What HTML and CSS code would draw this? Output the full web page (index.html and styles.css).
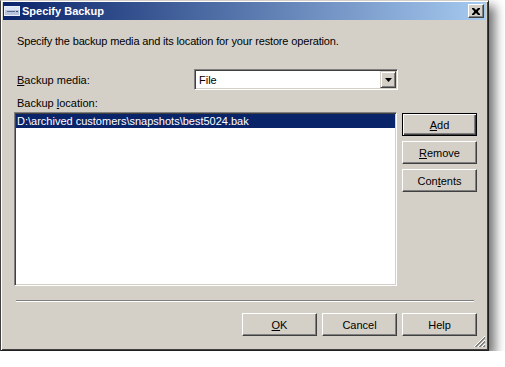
FILE: index.html
```html
<!DOCTYPE html>
<html>
<head>
<meta charset="utf-8">
<title>Specify Backup</title>
<link rel="stylesheet" href="styles.css">
</head>
<body>
<div class="window">
  <div class="titlebar">
    <svg class="ticon" width="16" height="10" viewBox="0 0 16 10">
      <rect x="0.5" y="0.5" width="15" height="9" fill="#b8c4dc" stroke="#e8eef8"/>
      <rect x="1" y="1" width="14" height="3" fill="#dce4f2"/>
      <line x1="3" y1="5.5" x2="11" y2="5.5" stroke="#5a6c90"/>
      <rect x="12" y="5" width="2" height="1" fill="#3a4c70"/>
    </svg>
    <span class="title">Specify Backup</span>
    <div class="close">
      <svg width="8" height="7" viewBox="0 0 8 7">
        <path d="M0 0h2l2 2 2-2h2v1l-2 2v1l2 2v1h-2l-2-2-2 2h-2v-1l2-2v-1l-2-2z" fill="#000"/>
      </svg>
    </div>
  </div>
  <div class="content">
    <p class="intro">Specify the backup media and its location for your restore operation.</p>
    <div class="media-row">
      <span class="label"><u>B</u>ackup media:</span>
      <div class="combo">
        <span class="combo-text">File</span>
        <span class="combo-btn">
          <svg width="7" height="4" viewBox="0 0 7 4"><path d="M0 0h7l-3.5 4z" fill="#000"/></svg>
        </span>
      </div>
    </div>
    <div class="loc-label">Backup <u>l</u>ocation:</div>
    <div class="loc-row">
      <div class="list">
        <div class="item selected">D:\archived customers\snapshots\best5024.bak</div>
      </div>
      <div class="side-btns">
        <div class="btn default"><u>A</u>dd</div>
        <div class="btn"><u>R</u>emove</div>
        <div class="btn">Con<u>t</u>ents</div>
      </div>
    </div>
    <div class="sep"></div>
    <div class="footer">
      <div class="btn"><u>O</u>K</div>
      <div class="btn">Cancel</div>
      <div class="btn">Help</div>
    </div>
  </div>
  <svg class="grip" width="13" height="13" viewBox="0 0 13 13">
    <path d="M12 1L1 12M12 5L5 12M12 9L9 12" stroke="#ffffff" stroke-width="1"/>
    <path d="M12 2L2 12M12 3L3 12M12 6L6 12M12 7L7 12M12 10L10 12M12 11L11 12" stroke="#808080" stroke-width="1"/>
  </svg>
</div>
</body>
</html>
```

FILE: styles.css
```css
html, body {
  margin: 0;
  padding: 0;
  background: #ffffff;
}
body {
  font-family: "Liberation Sans", Arial, sans-serif;
  font-size: 11px;
  color: #000;
}
.window {
  position: relative;
  box-sizing: border-box;
  width: 489px;
  height: 351px;
  background: #d4d0c8;
  border: 1px solid #202020;
  border-top-color: #d4d0c8;
  border-left-color: #404040;
  box-shadow: inset 1px 1px #ffffff, inset -1px -1px #404040, 6px 6px 10px rgba(0, 0, 0, 0.55);
  display: flex;
  flex-direction: column;
}
.titlebar {
  margin: 1px 2px 0 2px;
  height: 18px;
  background: linear-gradient(to right, #0a246a, #a6caf0);
  display: flex;
  align-items: center;
  color: #fff;
}
.ticon {
  margin-left: 1px;
  margin-right: 2px;
  flex: none;
}
.title {
  font-weight: bold;
  font-size: 11px;
  flex: 1;
}
.close {
  box-sizing: border-box;
  width: 16px;
  height: 14px;
  margin-right: 2px;
  background: #d4d0c8;
  border: 1px solid;
  border-color: #ffffff #404040 #404040 #ffffff;
  box-shadow: inset -1px -1px #808080;
  display: flex;
  align-items: center;
  justify-content: center;
}
.content {
  padding: 15px 11px 0 13px;
  display: flex;
  flex-direction: column;
}
.intro {
  margin: 0 0 0 3px;
  line-height: 13px;
  letter-spacing: -0.15px;
}
.media-row {
  margin-top: 21px;
  display: flex;
  align-items: center;
  height: 21px;
}
.label {
  width: 177px;
  margin-left: 3px;
  flex: none;
}
.combo {
  box-sizing: border-box;
  width: 204px;
  height: 21px;
  background: #fff;
  border: 1px solid;
  border-color: #808080 #ffffff #ffffff #808080;
  box-shadow: inset 1px 1px #404040, inset -1px -1px #d4d0c8;
  display: flex;
  align-items: center;
  padding: 1px;
}
.combo-text {
  flex: 1;
  padding-left: 3px;
}
.combo-btn {
  box-sizing: border-box;
  width: 16px;
  height: 17px;
  background: #d4d0c8;
  border: 1px solid;
  border-color: #d4d0c8 #404040 #404040 #d4d0c8;
  box-shadow: inset 1px 1px #ffffff, inset -1px -1px #808080;
  display: flex;
  align-items: center;
  justify-content: center;
}
.loc-label {
  margin: 7px 0 0 3px;
  line-height: 13px;
}
.loc-row {
  margin-top: 2px;
  display: flex;
  gap: 5px;
}
.list {
  box-sizing: border-box;
  width: 383px;
  height: 174px;
  background: #fff;
  border: 1px solid;
  border-color: #808080 #ffffff #ffffff #808080;
  box-shadow: inset 1px 1px #404040, inset -1px -1px #d4d0c8;
  padding: 1px;
}
.item {
  height: 14px;
  line-height: 14px;
  padding-left: 1px;
}
.item.selected {
  background: #0a246a;
  color: #fff;
}
.side-btns {
  margin-top: 1px;
  display: flex;
  flex-direction: column;
  gap: 5px;
}
.btn {
  box-sizing: border-box;
  width: 75px;
  height: 23px;
  background: #d4d0c8;
  border: 1px solid;
  border-color: #ffffff #404040 #404040 #ffffff;
  box-shadow: inset -1px -1px #808080;
  display: flex;
  align-items: center;
  justify-content: center;
}
.btn.default {
  border-color: #000;
  box-shadow: inset 1px 1px #ffffff, inset -1px -1px #404040, inset -2px -2px #808080;
}
.sep {
  margin: 14px 3px 0 2px;
  height: 0;
  border-top: 1px solid #808080;
  border-bottom: 1px solid #ffffff;
}
.footer {
  margin-top: 11px;
  display: flex;
  justify-content: flex-end;
  gap: 5px;
}
.grip {
  position: absolute;
  right: 2px;
  bottom: 2px;
}
```
